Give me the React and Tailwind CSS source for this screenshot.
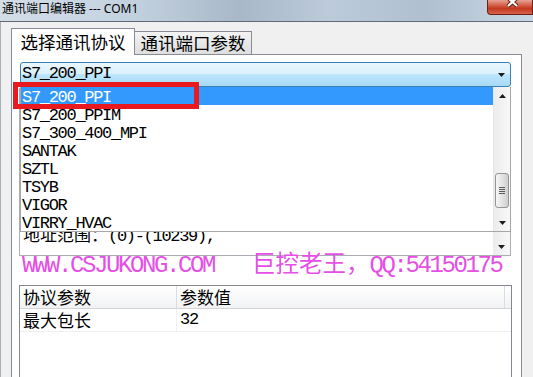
import React from 'react';

const MONO = "font-['Liberation_Mono','Noto_Sans_CJK_SC',monospace]";
const CJK = "font-['Noto_Sans_CJK_SC','Noto_Sans',sans-serif]";

const protocols = ['S7_200_PPI', 'S7_200_PPIM', 'S7_300_400_MPI', 'SANTAK', 'SZTL', 'TSYB', 'VIGOR', 'VIRRY_HVAC'];

// 滚动条上的小三角
function Arrow({ up }) {
  return (
    <svg width="7" height="4" viewBox="0 0 7 4">
      <polygon points={up ? '0,4 7,4 3.5,0' : '0,0 7,0 3.5,4'} fill="#1c1c1c" />
    </svg>
  );
}

function ListScrollbar() {
  return (
    <div className="w-[17px] h-full flex flex-col bg-[linear-gradient(90deg,#ececec,#f8f8f8)] border-l border-[#e6e6e6]">
      <div className="h-[17px] flex items-center justify-center">
        <Arrow up />
      </div>
      <div className="flex-1 pt-[69px]">
        <div className="mx-[1px] h-[35px] rounded-[3px] border border-[#959595] bg-[linear-gradient(90deg,#f6f6f6,#e4e4e5_50%,#cfcfd1)] flex flex-col items-center justify-center gap-[1px]">
          <div className="w-[6px] h-[1px] bg-[#5a5a5a]" />
          <div className="w-[6px] h-[1px] bg-[#5a5a5a]" />
          <div className="w-[6px] h-[1px] bg-[#5a5a5a]" />
          <div className="w-[6px] h-[1px] bg-[#5a5a5a]" />
        </div>
      </div>
      <div className="h-[17px] flex items-center justify-center">
        <Arrow />
      </div>
    </div>
  );
}

export default function App() {
  return (
    <div className="relative w-[533px] h-[377px] overflow-hidden bg-[#f0f0f0] text-black">
      {/* 标题栏 */}
      <div className="flex h-[22px] border-b border-[#5f6a76] bg-[linear-gradient(90deg,#d3dde8_0%,#c3d1df_25%,#a9b8c8_45%,#bccada_62%,#b0c0d1_80%,#c9d6e3_100%)]">
        <div className="flex-1 pl-[2px] text-[12px] leading-[18px] font-['Noto_Sans','Noto_Sans_CJK_SC',sans-serif]">
          通讯端口编辑器 --- COM1
        </div>
        <div className="w-[46px] h-[15px] rounded-bl-[4px] border border-t-0 border-[#6b2117] bg-[linear-gradient(#e7a396,#d0523b_45%,#c2391f_60%,#d8614a)] pl-[19px]">
          <svg width="11" height="8" viewBox="0 0 11 8" className="overflow-visible">
            <path d="M1 -2 L10 6 M10 -2 L1 6" stroke="#5a1810" strokeWidth="4" />
            <path d="M1 -2 L10 6 M10 -2 L1 6" stroke="#ffffff" strokeWidth="2.2" />
          </svg>
        </div>
      </div>

      {/* 窗体 */}
      <div className="h-[355px] border-l border-[#a9b3bd] pt-[6px]">
        {/* 选项卡 */}
        <div className="ml-[10px] flex items-end h-[26px]">
          <div className={`relative z-10 -mb-px h-[27px] w-[124px] border border-b-0 border-[#898c95] bg-white flex items-center justify-center text-[17.5px] leading-[20px] ${CJK}`}>
            选择通讯协议
          </div>
          <div className={`h-[23px] w-[117px] border border-l-0 border-b-0 border-[#898c95] bg-[linear-gradient(#f3f3f3,#dedede)] flex items-center justify-center text-[17.5px] leading-[20px] ${CJK}`}>
            通讯端口参数
          </div>
        </div>

        <div className="ml-[10px] w-[511px] h-[330px] border border-[#898c95] bg-white pt-[7px]">
          {/* 下拉框 */}
          <div className="relative ml-[8px] w-[491px] h-[25px] rounded-[3px] border border-[#3c7fb1] bg-[linear-gradient(#eaf6fd,#d9f0fc_50%,#bee6fd_50%,#a7d9f5)] flex">
            <div className={`flex-1 pl-[1px] pt-[2px] text-[17px] leading-[18px] tracking-[-1.3px] ${MONO}`}>S7_200_PPI</div>
            <div className="w-[17px] flex items-center justify-center">
              <Arrow />
            </div>

            {/* 展开的列表 */}
            <div className="absolute left-[-1px] top-[24px] z-20 w-[491px] h-[145px] border border-t-0 border-[#a7a7a7] bg-white flex">
              <div className="flex-1">
                {protocols.map((p, i) => (
                  <div
                    key={p}
                    className={`h-[18px] pl-[1px] pt-[2px] text-[17px] leading-[18px] tracking-[-1.3px] ${MONO} ${i === 0 ? 'bg-[#3399ff] text-white' : 'text-black'}`}
                  >
                    {p}
                  </div>
                ))}
              </div>
              <ListScrollbar />
            </div>
          </div>

          {/* 协议说明文本框（上半部分被列表挡住） */}
          <div className="ml-[7px] mt-[1px] w-[492px] h-[168px] border border-[#abadb3] flex">
            <div className="flex-1 flex flex-col justify-end pl-[3px] pb-[9px] text-[17px] leading-[18px]">
              <div><span className={CJK}>地址范围：</span><span className={`${MONO} tracking-[-1.3px]`}>(0)-(10239),</span></div>
            </div>
            <div className="w-[17px] bg-[linear-gradient(90deg,#ececec,#f8f8f8)] flex flex-col justify-end">
              <div className="h-[17px] flex items-center justify-center">
                <Arrow />
              </div>
            </div>
          </div>

          {/* 参数表 */}
          <div className="ml-[7px] mt-[29px] w-[493px] h-[120px] border border-[#828790] bg-white">
            <div className={`flex h-[23px] border-b border-[#d5d5d5] bg-[linear-gradient(#ffffff,#f1f2f4)] text-[17px] leading-[22px] ${CJK}`}>
              <div className="w-[157px] border-r border-[#dcdcdc] pl-[3px]">协议参数</div>
              <div className="w-[328px] border-r border-[#dcdcdc] pl-[3px]">参数值</div>
            </div>
            <div className="flex h-[23px] border-b border-[#f0f0f0] text-[17px] leading-[22px]">
              <div className={`w-[157px] border-r border-[#f0f0f0] pl-[3px] ${CJK}`}>最大包长</div>
              <div className={`pl-[3px] tracking-[-1.3px] ${MONO}`}>32</div>
            </div>
          </div>
        </div>
      </div>

      {/* 水印 */}
      <div className="absolute left-[22px] top-[250px] z-10 flex items-baseline whitespace-pre text-[#e64fe6] leading-[24px]">
        <span className={`text-[24px] tracking-[-2.4px] ${MONO}`}>WWW.CSJUKONG.COM</span>
        <span className={`ml-[38px] text-[23.5px] ${CJK}`}>巨控老王，</span>
        <span className={`text-[24px] tracking-[-2.4px] ${MONO}`}>QQ:54150175</span>
      </div>

      {/* 红色标注框 */}
      <div className="absolute left-[13px] top-[82px] z-30 w-[186px] h-[27px] border-[5px] border-[#e8191f]" />
    </div>
  );
}
